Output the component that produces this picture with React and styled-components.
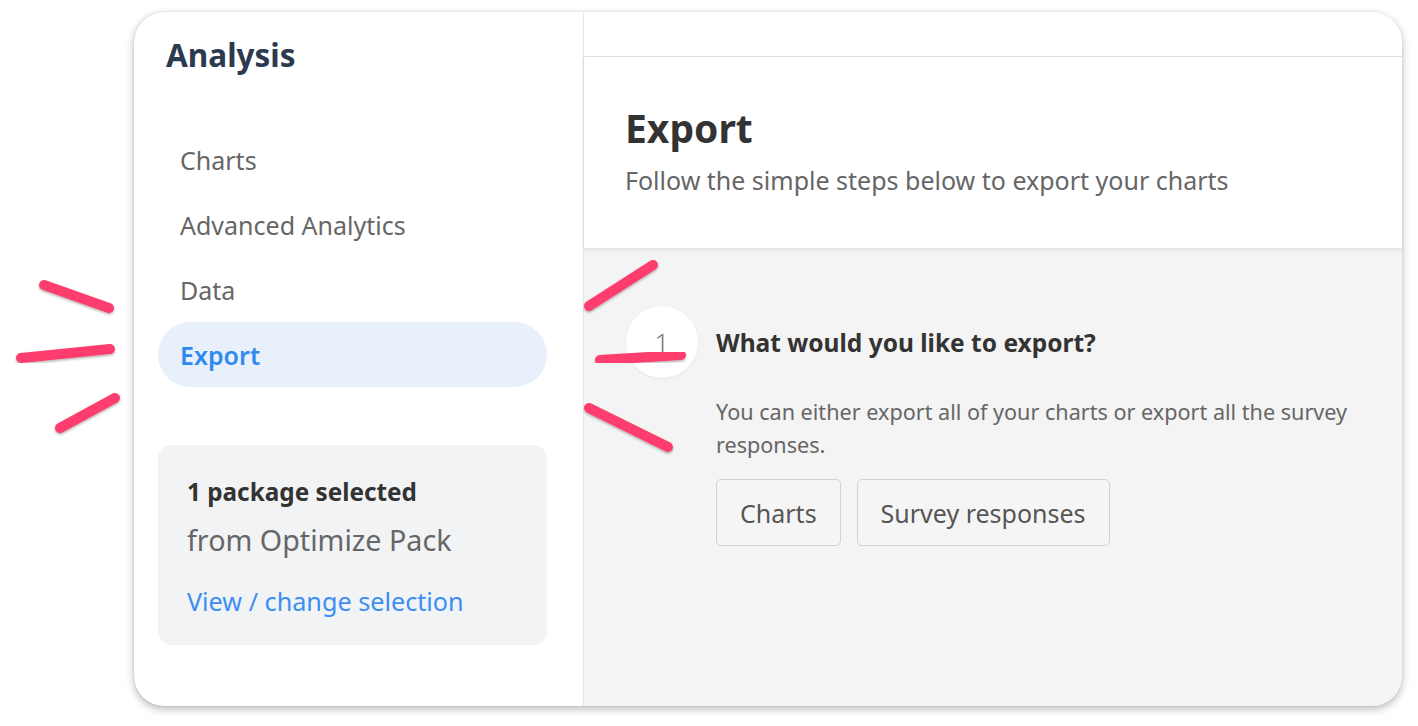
// Libraries
import React from 'react';

// Styles
import styled, { createGlobalStyle } from 'styled-components';

const GlobalStyle = createGlobalStyle`
  html, body {
    margin: 0;
    padding: 0;
    background: #fff;
    font-family: "Noto Sans", "Open Sans", sans-serif;
  }
  * {
    box-sizing: border-box;
  }
`;

const PageStyle = styled.div`
  position: relative;
  width: 1418px;
  height: 726px;
  padding: 12px 16px 20px 134px;
`;

const CardStyle = styled.div`
  display: flex;
  flex-direction: row;
  width: 1268px;
  height: 694px;
  border-radius: 30px;
  overflow: hidden;
  background: #fff;
  box-shadow: 0 3px 9px rgba(0, 0, 0, 0.28), 0 0 1px rgba(0, 0, 0, 0.25);
`;

const SidebarStyle = styled.div`
  display: flex;
  flex-direction: column;
  width: 450px;
  flex-shrink: 0;
  padding: 21px 36px 0 24px;
  border-right: 1px solid #e6e6e6;
`;

const SidebarTitle = styled.h1`
  margin: 0 0 50px 8px;
  font-size: 31.5px;
  line-height: 44px;
  font-weight: 700;
  color: #2c3a4f;
`;

const NavList = styled.div`
  display: flex;
  flex-direction: column;
`;

const NavItem = styled.div`
  display: flex;
  align-items: center;
  height: 65px;
  padding: 0 22px;
  border-radius: 33px;
  font-size: 25px;
  font-weight: ${(props) => (props.active ? 600 : 400)};
  color: ${(props) => (props.active ? '#2f8af0' : '#666')};
  background: ${(props) => (props.active ? '#e8f0fc' : 'transparent')};
`;

const PackageBox = styled.div`
  margin-top: 58px;
  height: 200px;
  padding: 31px 29px 0;
  border-radius: 14px;
  background: #f2f3f5;
`;

const PackageCount = styled.div`
  font-size: 24.3px;
  line-height: 32px;
  font-weight: 700;
  color: #333;
`;

const PackageFrom = styled.div`
  margin-top: 13px;
  font-size: 28.7px;
  line-height: 38px;
  color: #666;
`;

const PackageLink = styled.a`
  display: block;
  margin-top: 25px;
  font-size: 25.2px;
  line-height: 34px;
  color: #3b8ef2;
  text-decoration: none;
`;

const MainStyle = styled.div`
  display: flex;
  flex-direction: column;
  flex: 1;
  background: #f4f4f4;
`;

const TopStrip = styled.div`
  height: 45px;
  flex-shrink: 0;
  background: #fff;
  border-bottom: 1px solid #e6e6e6;
`;

const HeaderStyle = styled.div`
  position: relative;
  height: 191px;
  flex-shrink: 0;
  padding: 47px 41px 0;
  background: #fff;
  box-shadow: 0 1px 4px rgba(0, 0, 0, 0.12);
`;

const HeaderTitle = styled.h2`
  margin: 0;
  font-size: 39px;
  line-height: 47px;
  font-weight: 700;
  color: #333;
`;

const HeaderSubtitle = styled.p`
  margin: 13px 0 0;
  font-size: 25px;
  line-height: 32px;
  color: #666;
`;

const StepStyle = styled.div`
  display: grid;
  grid-template-columns: 72px 1fr;
  column-gap: 18px;
  padding: 58px 40px 0 42px;
`;

const StepNumber = styled.div`
  display: flex;
  align-items: center;
  justify-content: center;
  width: 72px;
  height: 72px;
  border-radius: 50%;
  background: #fff;
  box-shadow: 0 1px 3px rgba(0, 0, 0, 0.06);
  font-size: 26px;
  font-weight: 300;
  color: #777;
`;

const StepBody = styled.div`
  display: flex;
  flex-direction: column;
`;

const StepQuestion = styled.div`
  display: flex;
  align-items: center;
  height: 72px;
  font-size: 24.5px;
  font-weight: 700;
  color: #333;
`;

const StepText = styled.p`
  max-width: 680px;
  margin: 17px 0 0;
  font-size: 21.6px;
  line-height: 33px;
  color: #666;
`;

const ButtonRow = styled.div`
  display: flex;
  gap: 16px;
  margin-top: 18px;
`;

const ChoiceButton = styled.button`
  height: 67px;
  padding: 0 23px;
  border: 1px solid #d2d2d2;
  border-radius: 5px;
  background: #f5f5f5;
  font-family: inherit;
  font-size: 25px;
  color: #555;
`;

const MarksStyle = styled.svg`
  position: absolute;
  left: 0;
  top: 0;
  pointer-events: none;
  overflow: visible;
`;

const marks = [
  [44, 285, 109, 308],
  [21, 358, 110, 349],
  [60, 428, 115, 398],
  [589, 306, 653, 265],
  [600, 360, 681, 355],
  [589, 408, 668, 447],
];

// Components
const HighlightMarks = function () {
  return (
    <MarksStyle width="1418" height="726" viewBox="0 0 1418 726">
      <defs>
        <filter id="markShadow" x="-20%" y="-50%" width="140%" height="200%">
          <feDropShadow dx="0" dy="1.5" stdDeviation="1.2" floodColor="#000" floodOpacity="0.3" />
        </filter>
      </defs>
      {marks.map(([x1, y1, x2, y2], i) => (
        <line
          key={i}
          x1={x1}
          y1={y1}
          x2={x2}
          y2={y2}
          stroke="#fd3c6e"
          strokeWidth="10"
          strokeLinecap="round"
          filter="url(#markShadow)"
        />
      ))}
    </MarksStyle>
  );
};

const Sidebar = function () {
  const items = ['Charts', 'Advanced Analytics', 'Data', 'Export'];
  return (
    <SidebarStyle>
      <SidebarTitle>Analysis</SidebarTitle>
      <NavList>
        {items.map((item) => (
          <NavItem key={item} active={item === 'Export'}>
            {item}
          </NavItem>
        ))}
      </NavList>
      <PackageBox>
        <PackageCount>1 package selected</PackageCount>
        <PackageFrom>from Optimize Pack</PackageFrom>
        <PackageLink href="#">View / change selection</PackageLink>
      </PackageBox>
    </SidebarStyle>
  );
};

const Main = function () {
  return (
    <MainStyle>
      <TopStrip />
      <HeaderStyle>
        <HeaderTitle>Export</HeaderTitle>
        <HeaderSubtitle>Follow the simple steps below to export your charts</HeaderSubtitle>
      </HeaderStyle>
      <StepStyle>
        <StepNumber>1</StepNumber>
        <StepBody>
          <StepQuestion>What would you like to export?</StepQuestion>
          <StepText>
            You can either export all of your charts or export all the survey responses.
          </StepText>
          <ButtonRow>
            <ChoiceButton>Charts</ChoiceButton>
            <ChoiceButton>Survey responses</ChoiceButton>
          </ButtonRow>
        </StepBody>
      </StepStyle>
    </MainStyle>
  );
};

export default function App() {
  return (
    <>
      <GlobalStyle />
      <PageStyle>
        <CardStyle>
          <Sidebar />
          <Main />
        </CardStyle>
        <HighlightMarks />
      </PageStyle>
    </>
  );
}
